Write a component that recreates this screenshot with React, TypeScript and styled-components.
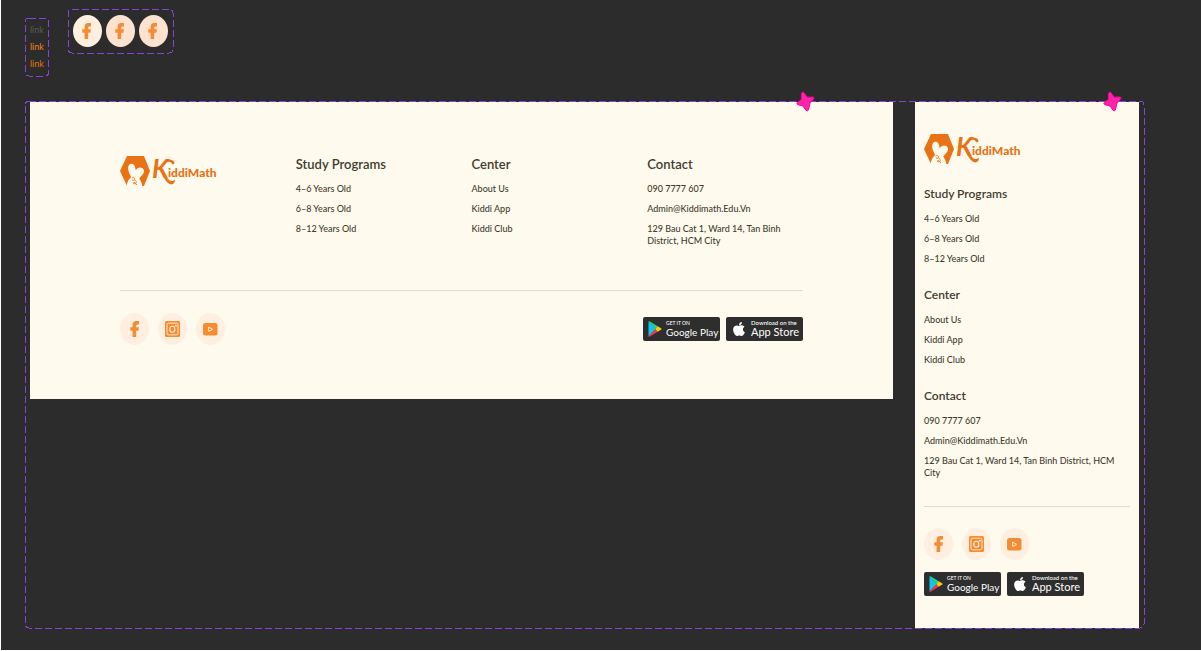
import React from "react";
import styled, { createGlobalStyle } from "styled-components";
import { FaApple } from "react-icons/fa";

const GlobalStyle = createGlobalStyle`
  * { box-sizing: border-box; }
  body { margin: 0; background: #fff; font-family: Lato, "Liberation Sans", sans-serif; }
  ul { list-style: none; margin: 0; padding: 0; }
  h2 { margin: 0; }
  a { color: inherit; text-decoration: none; }
  svg { display: block; flex: none; }
`;

const Canvas = styled.main`
  min-height: calc(100vh - 1px);
  margin-left: 1px;
  padding: 9px 57px 22px 24px;
  background: #2c2c2c;
`;

const Variants = styled.div`
  display: flex;
  align-items: flex-start;
  gap: 19px;
  height: 92px;
`;

const Frame = styled.div`
  position: relative;
`;

const Outline = styled.svg`
  position: absolute;
  inset: 0;
  width: 100%;
  height: 100%;
  overflow: visible;
  pointer-events: none;
`;

const LinkSet = styled(Frame)`
  display: flex;
  flex-direction: column;
  gap: 5px;
  margin-top: 9px;
  padding: 6px 5px;
`;

const StateLink = styled.a<{ $color: string }>`
  font-size: 9px;
  line-height: 12px;
  && { color: ${(p) => p.$color}; }
`;

const SocialSet = styled(Frame)`
  display: flex;
  gap: 4px;
  padding: 6px 5px;
`;

const SocialButton = styled.a<{ $fill?: string }>`
  display: flex;
  align-items: center;
  justify-content: center;
  width: 29px;
  height: 32px;
  border-radius: 50%;
  background: ${(p) => p.$fill ?? "#feefe0"};
`;

const Board = styled(Frame)`
  display: grid;
  grid-template-columns: 863fr 224fr;
  gap: 22px;
  align-items: start;
  padding: 1px 5px 0;
`;

const Footer = styled.footer<{ $compact?: boolean }>`
  position: relative;
  padding: ${(p) => (p.$compact ? "32px 9px" : "54px 90px")};
  background: #fffaee;
  color: #3f3d2f;
`;

const Columns = styled.div<{ $compact?: boolean }>`
  display: grid;
  grid-template-columns: ${(p) => (p.$compact ? "1fr" : "repeat(4, 1fr)")};
  gap: ${(p) => (p.$compact ? "22px" : "20px")};
`;

const Group = styled.nav`
  display: flex;
  flex-direction: column;
  gap: 11px;
`;

const Heading = styled.h2<{ $compact?: boolean }>`
  font-size: ${(p) => (p.$compact ? "12px" : "13px")};
  line-height: 16px;
  font-weight: 600;
`;

const Links = styled.ul`
  display: flex;
  flex-direction: column;
  gap: 8px;
  padding-right: 12px;
  font-size: 9px;
  font-weight: 500;
  line-height: 12px;
`;

const Divider = styled.hr<{ $compact?: boolean }>`
  height: 1px;
  margin: ${(p) => (p.$compact ? "27px 0 21px" : "43px 0 22px")};
  border: 0;
  background: #dedbd3;
`;

const Bottom = styled.div<{ $compact?: boolean }>`
  display: flex;
  flex-direction: ${(p) => (p.$compact ? "column" : "row")};
  align-items: ${(p) => (p.$compact ? "flex-start" : "center")};
  justify-content: space-between;
  gap: 12px;
`;

const Row = styled.div<{ $gap: number }>`
  display: flex;
  gap: ${(p) => p.$gap}px;
`;

const Badge = styled.a`
  display: flex;
  align-items: center;
  gap: 4px;
  width: 77px;
  height: 24px;
  padding-left: 5px;
  border-radius: 2px;
  background: #2e2e2e;
  white-space: nowrap;
  && { color: #fff; }
`;

const BadgeText = styled.span`
  display: flex;
  flex-direction: column;
`;

const Small = styled.span<{ $wide?: boolean }>`
  font-size: ${(p) => (p.$wide ? "6px" : "5px")};
  font-weight: 500;
  line-height: 6px;
`;

const Store = styled.span<{ $size: number }>`
  font-size: ${(p) => p.$size}px;
  font-weight: 400;
  line-height: 12px;
`;

const Star = styled.svg<{ $right: number }>`
  position: absolute;
  top: -11px;
  right: ${(p) => p.$right}px;
`;

const Dashes = () => (
  <Outline aria-hidden="true">
    <rect width="100%" height="100%" rx="4" fill="none" stroke="#8444d8" strokeWidth="1" strokeDasharray="7 3" shapeRendering="crispEdges" />
  </Outline>
);

const Sparkle = ({ right }: { right: number }) => (
  <Star $right={right} width="19" height="21" viewBox="0 0 19 21" aria-hidden="true">
    <path
      d="M6.2 1.4Q7.4.8 8 1.8L11.2 6.2 17 6Q18.6 6.2 17.8 7.6L14 12.2 12.4 19Q11.4 20.4 10 19.4L7 15 1.6 13.6Q.2 12.6 1.4 11.6L5.4 8.4 5.4 2.6Z"
      fill="#ff24a7"
      stroke="#ff009d"
      strokeWidth="1"
    />
  </Star>
);

const FacebookIcon = () => (
  <svg width="10" height="16" viewBox="0 0 10 16" aria-hidden="true">
    <path d="M2.6 16V9.8H.3V6.3H2.6V4.2C2.6 1.4 3.8 0 6.2 0H9V3.5H7.3Q6.2 3.5 6.2 4.6V6.3H8.9L8.4 9.8H6.2V16Z" fill="#f78b31" />
  </svg>
);

const InstagramIcon = () => (
  <svg width="15" height="16" viewBox="0 0 15 16" fill="none" aria-hidden="true">
    <rect width="15" height="16" rx="1.5" fill="#f78b31" />
    <rect x="2" y="2.2" width="11" height="11.6" rx="1.4" stroke="#feefe0" strokeWidth=".9" />
    <ellipse cx="7.3" cy="8.2" rx="2.6" ry="3" stroke="#feefe0" strokeWidth="1.1" />
    <circle cx="10.9" cy="4.6" r=".9" fill="#feefe0" />
  </svg>
);

const YoutubeIcon = () => (
  <svg width="15" height="13" viewBox="0 0 15 13" fill="none" aria-hidden="true">
    <rect width="14.5" height="12.5" rx="2.5" fill="#f78b31" />
    <path d="M5.7 4.1 9.6 6.3 5.7 8.5Z" stroke="#feefe0" strokeLinejoin="round" />
  </svg>
);

const PlayIcon = () => (
  <svg width="14" height="16" viewBox="0 0 14 16" aria-hidden="true">
    <path d="M.5.4 7.8 8 .5 15.6Z" fill="#12c4f4" />
    <path d="M.5.4Q1.1 0 2 .5L10 5.4 7.5 8Z" fill="#1fd88b" />
    <path d="M.5 15.6Q1.1 16 2 15.5L10 10.6 7.5 8Z" fill="#f2384b" />
    <path d="M9.8 5.3 13.3 7.4Q14 8 13.3 8.6L9.8 10.7 7.3 8Z" fill="#fdc90a" />
  </svg>
);

const Logo = () => (
  <svg width="98" height="30" viewBox="0 0 98 30" overflow="visible" role="img" aria-label="KiddiMath">
    <path d="M7 0H24L30 15 24 30H7L0 15Z" fill="#e87214" />
    <path
      d="M6.5 30.5C7 26 8.8 23 11.2 21 8.8 17 7.2 12.4 8.7 9.6 10 7.2 13 7.4 14.4 9.4 15.4 11 15.4 12.8 15.8 14.2 17 11.8 19.8 10.6 22.2 12 24.8 13.6 24.3 16.6 22.7 18.6 21.6 20.2 20.2 21.2 19.2 22.6 20.8 24.6 22 27.4 22.4 30.5Z"
      fill="#fffaee"
    />
    <path d="M11.6 22.3C13 20.8 15.3 22.1 14.4 23.6 13.7 24.6 12 24.7 12.4 23.5M14.4 24C17.5 24.8 16.4 28.8 13.8 27.7 12.2 26.8 14.7 25.5 15.8 27.7L17 29" fill="none" stroke="#e87214" strokeWidth=".9" />
    <text x="32" y="22" fontSize="26" fontWeight="700" fontStyle="italic" fill="#e87214">K</text>
    <path d="M46.5 4C49 2.8 53.4 3.4 54.4 6.2 54.8 8.2 52.6 9 51.8 7.4 50.8 5.8 48.8 5.4 46 6.4Z" fill="#e87214" />
    <path d="M43.5 17Q46.5 22 49 24 52 26.4 54.8 23.6 55.5 27.8 51.5 28.4 46.5 28 42.5 19Z" fill="#e87214" />
    <text x="48" y="21" fontSize="12" fontWeight="900" fill="#e87214">iddiMath</text>
  </svg>
);

const SocialLinks = () => (
  <Row $gap={9}>
    <SocialButton href="#" aria-label="Facebook"><FacebookIcon /></SocialButton>
    <SocialButton href="#" aria-label="Instagram"><InstagramIcon /></SocialButton>
    <SocialButton href="#" aria-label="YouTube"><YoutubeIcon /></SocialButton>
  </Row>
);

const StoreBadges = () => (
  <Row $gap={6}>
    <Badge href="#">
      <PlayIcon />
      <BadgeText><Small>GET IT ON</Small><Store $size={10}>Google Play</Store></BadgeText>
    </Badge>
    <Badge href="#">
      <FaApple size={16} />
      <BadgeText><Small $wide>Download on the</Small><Store $size={11}>App Store</Store></BadgeText>
    </Badge>
  </Row>
);

const groups = [
  { title: "Study Programs", items: ["4–6 Years Old", "6–8 Years Old", "8–12 Years Old"] },
  { title: "Center", items: ["About Us", "Kiddi App", "Kiddi Club"] },
  { title: "Contact", items: ["090 7777 607", "Admin@Kiddimath.Edu.Vn", "129 Bau Cat 1, Ward 14, Tan Binh District, HCM City"] },
];

const SiteFooter = ({ compact = false }: { compact?: boolean }) => (
  <Footer $compact={compact}>
    <Columns $compact={compact}>
      <Logo />
      {groups.map((group) => (
        <Group key={group.title} aria-label={group.title}>
          <Heading $compact={compact}>{group.title}</Heading>
          <Links>
            {group.items.map((item) => (
              <li key={item}><a href="#">{item}</a></li>
            ))}
          </Links>
        </Group>
      ))}
    </Columns>
    <Divider $compact={compact} />
    <Bottom $compact={compact}>
      <SocialLinks />
      <StoreBadges />
    </Bottom>
    <Sparkle right={compact ? 17 : 78} />
  </Footer>
);

export default function App() {
  return (
    <>
      <GlobalStyle />
      <Canvas>
        <Variants>
          <LinkSet>
            <Dashes />
            <StateLink href="#" $color="#5d5b50">link</StateLink>
            <StateLink href="#" $color="#f58220">link</StateLink>
            <StateLink href="#" $color="#e87214">link</StateLink>
          </LinkSet>
          <SocialSet>
            <Dashes />
            {["#feefe0", "#fee2d0", "#fee2d0"].map((fill, i) => (
              <SocialButton key={i} href="#" $fill={fill} aria-label="Facebook"><FacebookIcon /></SocialButton>
            ))}
          </SocialSet>
        </Variants>
        <Board>
          <Dashes />
          <SiteFooter />
          <SiteFooter compact />
        </Board>
      </Canvas>
    </>
  );
}
